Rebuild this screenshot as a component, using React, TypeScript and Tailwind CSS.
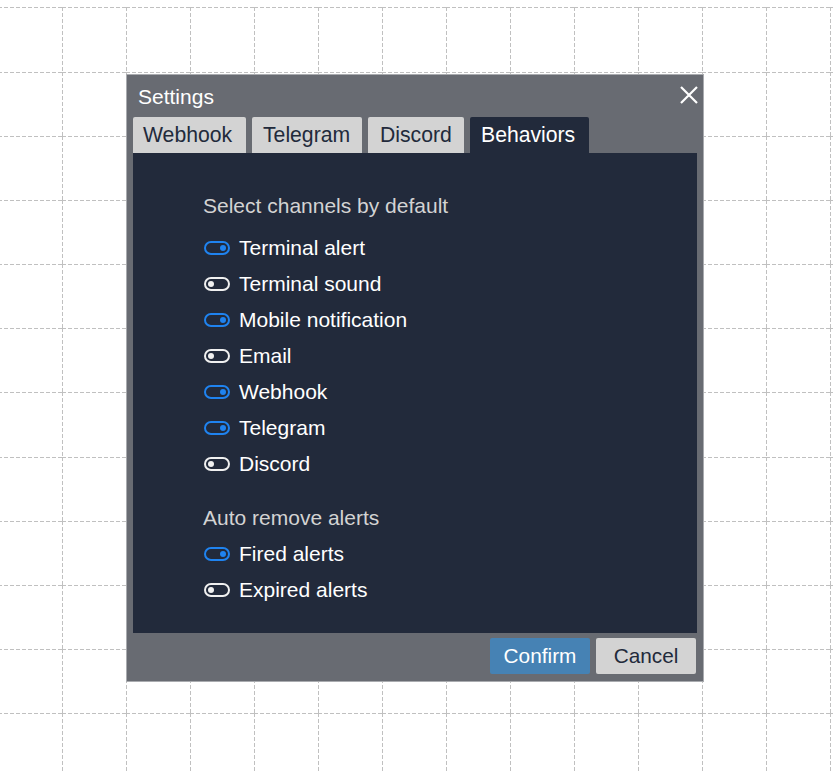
const channels = [
  { label: "Terminal alert", on: true },
  { label: "Terminal sound", on: false },
  { label: "Mobile notification", on: true },
  { label: "Email", on: false },
  { label: "Webhook", on: true },
  { label: "Telegram", on: true },
  { label: "Discord", on: false },
];

const autoRemove = [
  { label: "Fired alerts", on: true },
  { label: "Expired alerts", on: false },
];

const tabs = [
  { label: "Webhook", size: "w-[113px] pl-[10px]" },
  { label: "Telegram", size: "w-[110px] pl-[11px]" },
  { label: "Discord", size: "w-[96px] pl-[12px]" },
];

function Toggle({ label, on }: { label: string; on: boolean }) {
  return (
    <div className="flex h-9 items-center">
      <span
        className={`ml-px flex h-[14px] w-[26px] items-center rounded-full border-2 px-[2px] ${
          on ? "justify-end border-[#1f83f0]" : "justify-start border-[#f0f0f0]"
        }`}
      >
        <span className={`h-[6px] w-[6px] rounded-full ${on ? "bg-[#1f83f0]" : "bg-[#f0f0f0]"}`} />
      </span>
      <span className="ml-[9px] text-[21px] text-white">{label}</span>
    </div>
  );
}

export default function App() {
  return (
    <div className="relative h-[773px] w-[833px] overflow-hidden bg-white font-['Liberation_Sans',Arial,sans-serif]">
      {/* dashed grid behind the dialog */}
      <div className="absolute left-[-2px] top-[7px] grid grid-cols-[repeat(14,64px)] grid-rows-[65px_64px_64px_64px_64px_64px_65px_64px_64px_64px_64px_64px]">
        {Array.from({ length: 14 * 12 }).map((_, i) => (
          <div
            key={i}
            className="bg-[repeating-linear-gradient(90deg,#c0c0c0_0_4px,transparent_4px_6px),repeating-linear-gradient(180deg,#c0c0c0_0_4px,transparent_4px_6px)] bg-[size:100%_1px,1px_100%] bg-no-repeat"
          />
        ))}
      </div>

      <div className="absolute left-[126px] top-[74px] flex h-[608px] w-[578px] flex-col border border-[#a9abaf] bg-[#686b72]">
        <div className="flex h-[42px] items-start justify-between pl-[11px] pr-[5px] pt-[10px]">
          <span className="text-[21px] leading-6 text-white">Settings</span>
          <svg viewBox="0 0 18 18" className="mt-px h-[18px] w-[18px]">
            <path d="M1 1L17 17M17 1L1 17" stroke="#fff" strokeWidth={2.2} fill="none" />
          </svg>
        </div>

        <div className="flex gap-[6px] pl-[6px] text-[21.2px]">
          {tabs.map((t) => (
            <div
              key={t.label}
              className={`flex h-9 items-center rounded-t-[2px] bg-[#d3d3d3] text-[#222a3b] ${t.size}`}
            >
              {t.label}
            </div>
          ))}
          <div className="flex h-9 w-[119px] items-center rounded-t-[2px] bg-[#222a3b] pl-[11px] text-white">
            Behaviors
          </div>
        </div>

        <div className="mx-[6px] flex h-[480px] flex-col bg-[#222a3b] pl-[70px] pt-[35px]">
          <div className="mb-[6px] h-9 text-[21px] leading-9 text-[#d3d3d3]">Select channels by default</div>
          {channels.map((c) => (
            <Toggle key={c.label} {...c} />
          ))}
          <div className="mt-[18px] h-9 text-[21px] leading-9 text-[#d3d3d3]">Auto remove alerts</div>
          {autoRemove.map((c) => (
            <Toggle key={c.label} {...c} />
          ))}
        </div>

        <div className="flex flex-1 items-center justify-end gap-[6px] pb-[2px] pr-[7px] text-[20.8px]">
          <button className="h-9 w-[100px] rounded-[2px] bg-[#4682b4] text-white">Confirm</button>
          <button className="h-9 w-[100px] rounded-[2px] bg-[#d3d3d3] text-[#222a3b]">Cancel</button>
        </div>
      </div>
    </div>
  );
}
